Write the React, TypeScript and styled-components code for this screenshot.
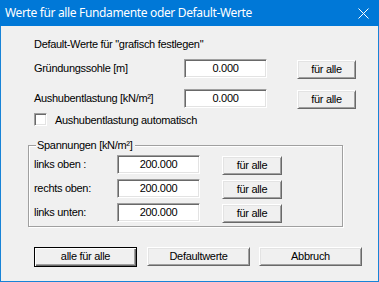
import React from "react";
import styled, { createGlobalStyle } from "styled-components";

const Global = createGlobalStyle`
  html, body { margin: 0; padding: 0; background: #f0f0f0; }
  #root { width: 379px; height: 282px; }
`;

const Window = styled.div`
  width: 379px;
  height: 282px;
  box-sizing: border-box;
  border: 1px solid #1883d7;
  border-top: none;
  background: #f0f0f0;
  display: flex;
  flex-direction: column;
  font-family: "Liberation Sans", Arial, sans-serif;
  font-size: 11px;
  letter-spacing: -0.3px;
  color: #000;
`;

const TitleBar = styled.div`
  height: 26px;
  margin: 0 -1px;
  background: #0078d7;
  display: flex;
  align-items: center;
  justify-content: space-between;
  padding: 0 10px 0 5px;
  color: #fff;
  font-family: "Noto Sans", "Open Sans", sans-serif;
  font-size: 12px;
  letter-spacing: -0.35px;
  flex-shrink: 0;
`;

const TitleText = styled.span`
  line-height: 16px;
  padding-bottom: 1px;
`;

const CloseIcon = styled.svg`
  width: 11px;
  height: 11px;
  display: block;
`;

const Body = styled.div`
  display: flex;
  flex-direction: column;
  padding: 12px 0 0 33px;
`;

const Heading = styled.div`
  height: 13px;
  line-height: 13px;
`;

const Row = styled.div<{ $mt: number }>`
  display: flex;
  align-items: flex-start;
  margin-top: ${(p) => p.$mt}px;
`;

const Label = styled.div<{ $w: number }>`
  width: ${(p) => p.$w}px;
  height: 19px;
  line-height: 19px;
  flex-shrink: 0;
`;

const Field = styled.div`
  width: 83px;
  height: 19px;
  box-sizing: border-box;
  background: #fff;
  border-style: solid;
  border-width: 1px;
  border-color: #a0a0a0 #fff #fff #a0a0a0;
  box-shadow: inset 1px 1px 0 #696969, inset -1px -1px 0 #e3e3e3;
  text-align: center;
  line-height: 17px;
  flex-shrink: 0;
`;

const Button = styled.div<{ $w: number; $ml: number; $mt?: number; $default?: boolean }>`
  width: ${(p) => p.$w}px;
  height: ${(p) => (p.$default ? 20 : 19)}px;
  margin-left: ${(p) => p.$ml}px;
  margin-top: ${(p) => p.$mt ?? 0}px;
  box-sizing: border-box;
  background: #f0f0f0;
  border-style: solid;
  border-width: 1px;
  border-color: ${(p) => (p.$default ? "#000" : "#fff #696969 #696969 #fff")};
  box-shadow: ${(p) =>
    p.$default
      ? "inset 1px 1px 0 #fff, inset -1px -1px 0 #696969, inset -2px -2px 0 #a0a0a0"
      : "inset 1px 1px 0 #e3e3e3, inset -1px -1px 0 #a0a0a0"};
  text-align: center;
  line-height: ${(p) => (p.$default ? 17 : 16)}px;
  flex-shrink: 0;
`;

const CheckRow = styled.div`
  display: flex;
  align-items: center;
  margin-top: 4px;
  height: 13px;
`;

const CheckBox = styled.div`
  width: 13px;
  height: 13px;
  box-sizing: border-box;
  background: #fff;
  border: 1px solid #a0a0a0;
  box-shadow: inset 1px 1px 0 #696969, inset -1px -1px 0 #e3e3e3;
  border-color: #a0a0a0 #fff #fff #a0a0a0;
  margin-right: 8px;
`;

const Group = styled.div`
  position: relative;
  margin: 19px 0 0 -6px;
  width: 315px;
  height: 82px;
  box-sizing: border-box;
  border: 1px solid #a0a0a0;
  box-shadow: 1px 1px 0 #fff, inset 1px 1px 0 #fff;
  padding: 9px 0 0 5px;
  display: flex;
  flex-direction: column;
  gap: 4px;
`;

const Legend = styled.span`
  position: absolute;
  left: 7px;
  top: -7px;
  padding: 0 2px 0 1px;
  background: #f0f0f0;
  line-height: 13px;
`;

const GroupRow = styled.div`
  display: flex;
  align-items: flex-start;
`;

const Footer = styled.div`
  display: flex;
  margin-top: 20px;
`;

export default function App() {
  return (
    <>
      <Global />
      <Window>
        <TitleBar>
          <TitleText>Werte für alle Fundamente oder Default-Werte</TitleText>
          <CloseIcon viewBox="0 0 11 11">
            <path d="M0.5 0.5 L10.5 10.5 M10.5 0.5 L0.5 10.5" stroke="#fff" strokeWidth="1" />
          </CloseIcon>
        </TitleBar>
        <Body>
          <Heading>Default-Werte für "grafisch festlegen"</Heading>
          <Row $mt={8}>
            <Label $w={150}>Gründungssohle [m]</Label>
            <Field>0.000</Field>
            <Button $w={59} $ml={30} $mt={1}>für alle</Button>
          </Row>
          <Row $mt={10}>
            <Label $w={150}>Aushubentlastung [kN/m²]</Label>
            <Field>0.000</Field>
            <Button $w={59} $ml={30} $mt={1}>für alle</Button>
          </Row>
          <CheckRow>
            <CheckBox />
            <span>Aushubentlastung automatisch</span>
          </CheckRow>
          <Group>
            <Legend>Spannungen [kN/m²]</Legend>
            <GroupRow>
              <Label $w={83}>links oben :</Label>
              <Field>200.000</Field>
              <Button $w={60} $ml={22} $mt={1}>für alle</Button>
            </GroupRow>
            <GroupRow>
              <Label $w={83}>rechts oben:</Label>
              <Field>200.000</Field>
              <Button $w={60} $ml={22} $mt={1}>für alle</Button>
            </GroupRow>
            <GroupRow>
              <Label $w={83}>links unten:</Label>
              <Field>200.000</Field>
              <Button $w={60} $ml={22} $mt={1}>für alle</Button>
            </GroupRow>
          </Group>
          <Footer>
            <Button $w={103} $ml={0} $default>alle für alle</Button>
            <Button $w={103} $ml={10}>Defaultwerte</Button>
            <Button $w={103} $ml={9}>Abbruch</Button>
          </Footer>
        </Body>
      </Window>
    </>
  );
}
